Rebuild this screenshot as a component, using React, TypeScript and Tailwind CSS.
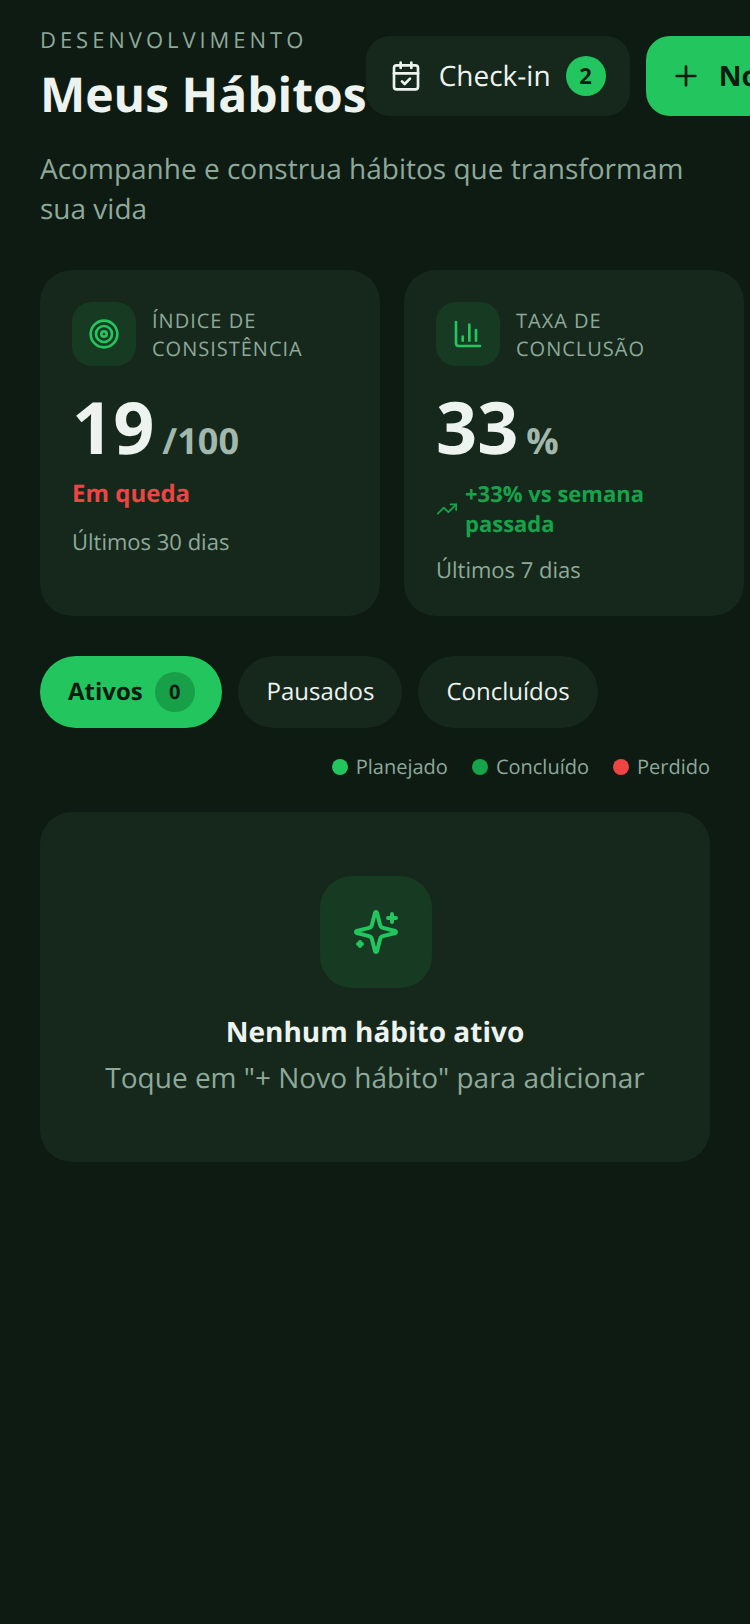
import { CalendarCheck, Plus, TrendingUp } from "lucide-react";

function Target() {
  return (
    <svg width="32" height="32" viewBox="0 0 24 24" fill="none" stroke="#22c55e" strokeWidth="2" strokeLinecap="round" strokeLinejoin="round">
      <circle cx="12" cy="12" r="10" />
      <circle cx="12" cy="12" r="6" />
      <circle cx="12" cy="12" r="2" />
    </svg>
  );
}

function Chart() {
  return (
    <svg width="32" height="32" viewBox="0 0 24 24" fill="none" stroke="#22c55e" strokeWidth="2" strokeLinecap="round" strokeLinejoin="round">
      <path d="M3 3v16a2 2 0 0 0 2 2h16" />
      <path d="M8 17v-3" />
      <path d="M13 17V5" />
      <path d="M18 17V9" />
    </svg>
  );
}

function Sparkle() {
  return (
    <svg width="48" height="48" viewBox="0 0 24 24" fill="none" stroke="#22c55e" strokeWidth="2" strokeLinecap="round" strokeLinejoin="round">
      <path d="M9.937 15.5A2 2 0 0 0 8.5 14.063l-6.135-1.582a.5.5 0 0 1 0-.962L8.5 9.936A2 2 0 0 0 9.937 8.5l1.582-6.135a.5.5 0 0 1 .963 0L14.063 8.5A2 2 0 0 0 15.5 9.937l6.135 1.581a.5.5 0 0 1 0 .964L15.5 14.063a2 2 0 0 0-1.437 1.437l-1.582 6.135a.5.5 0 0 1-.963 0z" />
      <path d="M20 3v4" />
      <path d="M22 5h-4" />
      <path d="M4 17v2" />
      <path d="M5 18H3" />
    </svg>
  );
}

export default function App() {
  return (
    <div className="w-[750px] h-[1624px] overflow-hidden bg-[#0d1b13] font-['Open_Sans',sans-serif] [text-rendering:geometricPrecision] px-10 pt-[24px]">
      <div className="flex w-[900px]">
        <div className="shrink-0">
          <div className="text-[22px] leading-[32px] tracking-[0.18em] text-[#8fa89a] mb-[9px]">DESENVOLVIMENTO</div>
          <h1 className="text-[48px] leading-[60px] font-bold text-[#edf3ef] whitespace-nowrap">Meus Hábitos</h1>
        </div>
        <div className="flex gap-4 mt-[12px] -ml-[1px] shrink-0 h-20">
          <div className="h-20 w-[264px] rounded-3xl bg-[#15281b] flex items-center pl-6">
            <CalendarCheck size={32} color="#edf3ef" strokeWidth={2} />
            <span className="ml-[17px] text-[28px] text-[#edf3ef]">Check-in</span>
            <span className="ml-[15px] w-10 h-10 rounded-full bg-[#22c55e] text-[#0d1b13] flex items-center justify-center text-[22px] font-bold">2</span>
          </div>
          <div className="h-20 rounded-3xl bg-[#22c55e] flex items-center pl-6 gap-[17px]">
            <Plus size={32} color="#0d1b13" strokeWidth={2} />
            <span className="text-[28px] font-bold text-[#0d1b13] whitespace-nowrap">Novo hábito</span>
          </div>
        </div>
      </div>

      <p className="mt-[24px] text-[28px] leading-[40px] text-[#8fa89a] w-[670px]">Acompanhe e construa hábitos que transformam sua vida</p>

      <div className="mt-[41px] flex gap-6 w-[704px]">
        <div className="w-[340px] h-[346px] rounded-[32px] bg-[#15281b] p-8 shrink-0">
          <div className="flex items-center gap-4">
            <div className="w-16 h-16 rounded-[20px] bg-[#173a23] flex items-center justify-center"><Target /></div>
            <div className="pt-[2px] text-[20px] leading-[28px] tracking-[0.05em] text-[#8fa89a]">ÍNDICE DE<br />CONSISTÊNCIA</div>
          </div>
          <div className="mt-[16px] flex items-baseline gap-2">
            <span className="text-[72px] leading-[90px] font-bold text-[#edf3ef]">19</span>
            <span className="text-[36px] font-bold text-[#a3b8ad]">/100</span>
          </div>
          <div className="text-[24px] leading-[32px] font-bold text-[#ef4444] mt-[6px]">Em queda</div>
          <div className="text-[22px] leading-[32px] text-[#8fa89a] mt-[16px]">Últimos 30 dias</div>
        </div>
        <div className="w-[340px] h-[346px] rounded-[32px] bg-[#15281b] p-8 shrink-0">
          <div className="flex items-center gap-4">
            <div className="w-16 h-16 rounded-[20px] bg-[#173a23] flex items-center justify-center"><Chart /></div>
            <div className="pt-[2px] text-[20px] leading-[28px] tracking-[0.05em] text-[#8fa89a]">TAXA DE<br />CONCLUSÃO</div>
          </div>
          <div className="mt-[16px] flex items-baseline gap-2">
            <span className="text-[72px] leading-[90px] font-bold text-[#edf3ef]">33</span>
            <span className="text-[36px] font-bold text-[#a3b8ad]">%</span>
          </div>
          <div className="flex items-center gap-[7px] mt-[7px]">
            <TrendingUp size={22} color="#16a34a" strokeWidth={2} className="shrink-0" />
            <span className="text-[22px] leading-[30px] font-bold text-[#16a34a]">+33% vs semana passada</span>
          </div>
          <div className="text-[22px] leading-[32px] text-[#8fa89a] mt-[15px]">Últimos 7 dias</div>
        </div>
      </div>

      <div className="mt-[40px] flex gap-4">
        <div className="h-[72px] w-[182px] rounded-full bg-[#22c55e] flex items-center pl-7 gap-3">
          <span className="text-[24px] font-bold text-[#0d1b13]">Ativos</span>
          <span className="w-10 h-10 rounded-full bg-[#18a049] flex items-center justify-center text-[20px] font-bold text-[#0d1b13]">0</span>
        </div>
        <div className="h-[72px] w-[164px] rounded-full bg-[#15281b] flex items-center justify-center pl-[1px] text-[24px] text-[#edf3ef]">Pausados</div>
        <div className="h-[72px] w-[180px] rounded-full bg-[#15281b] flex items-center justify-center text-[24px] text-[#edf3ef]">Concluídos</div>
      </div>

      <div className="mt-[23px] flex justify-end gap-6 text-[20px] leading-[32px] text-[#8fa89a]">
        <div className="flex items-center gap-2"><span className="w-4 h-4 rounded-full bg-[#22c55e]" />Planejado</div>
        <div className="flex items-center gap-2"><span className="w-4 h-4 rounded-full bg-[#16a34a]" />Concluído</div>
        <div className="flex items-center gap-2"><span className="w-4 h-4 rounded-full bg-[#ef4444]" />Perdido</div>
      </div>

      <div className="mt-[29px] h-[350px] rounded-[32px] bg-[#15281b] flex flex-col items-center pt-16">
        <div className="w-28 h-28 ml-[2px] rounded-[32px] bg-[#173a23] flex items-center justify-center"><Sparkle /></div>
        <div className="mt-6 text-[28px] leading-[40px] font-bold text-[#edf3ef]">Nenhum hábito ativo</div>
        <div className="mt-[6px] text-[28px] leading-[40px] text-[#8fa89a]">Toque em "+ Novo hábito" para adicionar</div>
      </div>
    </div>
  );
}
